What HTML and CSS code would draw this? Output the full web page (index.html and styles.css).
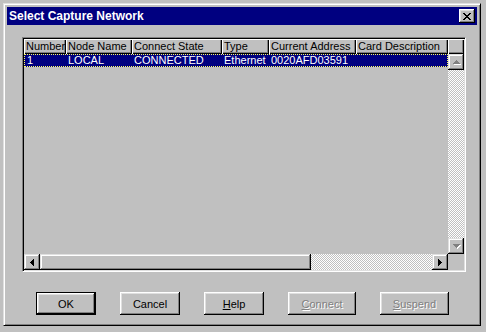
FILE: index.html
```html
<!DOCTYPE html>
<html lang="en">
<head>
  <meta charset="UTF-8" />
  <title>Select Capture Network</title>
  <link rel="stylesheet" href="styles.css">
</head>
<body>
  <div class="window">
    <div class="titlebar">
      <span class="title">Select Capture Network</span>
      <div class="close-btn">
        <svg width="8" height="7" viewBox="0 0 8 7" shape-rendering="crispEdges">
          <path d="M0 0h2v1h1v1h2V1h1V0h2v1H7v1H6v1H5v1h1v1h1v1h1v1H6V6H5V5H3v1H2v1H0V6h1V5h1V4h1V3H2V2H1V1H0z" fill="#000"/>
        </svg>
      </div>
    </div>

    <div class="client">
      <div class="listview">
        <div class="lv-header">
          <div class="hcol w1">Number</div>
          <div class="hcol w2">Node Name</div>
          <div class="hcol w3">Connect State</div>
          <div class="hcol w4">Type</div>
          <div class="hcol w5">Current Address</div>
          <div class="hcol w6">Card Description</div>
          <div class="hcol stub"></div>
        </div>
        <div class="lv-body">
          <div class="rows">
            <div class="row selected">
              <span class="cell w1">1</span>
              <span class="cell w2">LOCAL</span>
              <span class="cell w3">CONNECTED</span>
              <span class="cell w4">Ethernet</span>
              <span class="cell w5">0020AFD03591</span>
              <span class="cell w6"></span>
            </div>
          </div>
          <div class="vscroll">
            <div class="sbtn">
              <svg class="arrow disabled" width="7" height="4" viewBox="0 0 7 4" shape-rendering="crispEdges"><path d="M3 0h1v1h1v1h1v1h1v1H0V3h1V2h1V1h1z"/></svg>
            </div>
            <div class="track"></div>
            <div class="sbtn">
              <svg class="arrow disabled" width="7" height="4" viewBox="0 0 7 4" shape-rendering="crispEdges"><path d="M0 0h7v1H6v1H5v1H4v1H3V3H2V2H1V1H0z"/></svg>
            </div>
          </div>
          <div class="hscroll">
            <div class="sbtn">
              <svg class="arrow" width="4" height="7" viewBox="0 0 4 7" shape-rendering="crispEdges"><path d="M3 0h1v7H3V6H2V5H1V4H0V3h1V2h1V1h1z"/></svg>
            </div>
            <div class="thumb"></div>
            <div class="track"></div>
            <div class="sbtn">
              <svg class="arrow" width="4" height="7" viewBox="0 0 4 7" shape-rendering="crispEdges"><path d="M0 0h1v1h1v1h1v1h1v1H3v1H2v1H1v1H0z"/></svg>
            </div>
          </div>
          <div class="corner"></div>
        </div>
      </div>

      <div class="buttons">
        <div class="btn default">OK</div>
        <div class="btn">Cancel</div>
        <div class="btn"><u>H</u>elp</div>
        <div class="btn wide disabled"><u>C</u>onnect</div>
        <div class="btn wider disabled"><u>S</u>uspend</div>
      </div>
    </div>
  </div>
</body>
</html>
```

FILE: styles.css
```css
body {
  margin: 0;
  background: #c0c0c0;
  font-family: 'Liberation Sans', Arial, sans-serif;
  font-size: 11px;
  color: #000;
}
.window {
  box-sizing: border-box;
  margin: 3px 0 0 3px;
  width: 478px;
  height: 323px;
  padding: 3px;
  background: #c0c0c0;
  border: 1px solid;
  border-color: #dfdfdf #000 #000 #dfdfdf;
  box-shadow: inset 1px 1px #fff, inset -1px -1px #808080;
}
.titlebar {
  height: 18px;
  background: #000080;
  display: flex;
  align-items: center;
  padding-left: 2px;
}
.title {
  color: #fff;
  font-weight: bold;
  font-size: 12px;
}
.close-btn {
  margin-left: auto;
  margin-right: 2px;
  width: 16px;
  height: 14px;
  box-sizing: border-box;
  background: #c0c0c0;
  display: flex;
  align-items: center;
  justify-content: center;
  box-shadow: inset -1px -1px #000, inset 1px 1px #fff, inset -2px -2px #808080, inset 2px 2px #dfdfdf;
}
.client {
  padding: 12px 0 0 15px;
}
.listview {
  box-sizing: border-box;
  width: 444px;
  height: 235px;
  border: 1px solid;
  border-color: #808080 #fff #fff #808080;
  box-shadow: inset 1px 1px #000, inset -1px -1px #dfdfdf;
  padding: 1px;
  background: #c0c0c0;
  display: flex;
  flex-direction: column;
}
.lv-header {
  display: flex;
  height: 15px;
  flex: none;
}
.hcol {
  box-sizing: border-box;
  height: 15px;
  line-height: 14px;
  padding-left: 2px;
  white-space: nowrap;
  overflow: hidden;
  background: #c0c0c0;
  box-shadow: inset 1px 1px #fff, inset -1px -1px #000, inset -2px -2px #808080;
}
.w1 { width: 42px; }
.w2 { width: 66px; }
.w3 { width: 90px; }
.w4 { width: 47px; }
.w5 { width: 87px; }
.w6 { width: 92px; }
.stub { width: 16px; }
.lv-body {
  flex: 1;
  display: grid;
  grid-template-columns: 424px 16px;
  grid-template-rows: 1fr 16px;
}
.rows {
  background: #c0c0c0;
}
.row {
  display: flex;
  height: 13px;
  box-sizing: border-box;
}
.row.selected {
  background: #000080;
  color: #fff;
  border: 1px dotted #ffff60;
}
.cell {
  box-sizing: border-box;
  padding-left: 2px;
  line-height: 11px;
  white-space: nowrap;
  overflow: hidden;
  flex: none;
}
.row .w1 { width: 41px; }
.vscroll {
  display: flex;
  flex-direction: column;
}
.hscroll {
  display: flex;
}
.sbtn {
  width: 16px;
  height: 16px;
  flex: none;
  box-sizing: border-box;
  background: #c0c0c0;
  display: flex;
  align-items: center;
  justify-content: center;
  box-shadow: inset -1px -1px #000, inset 1px 1px #dfdfdf, inset -2px -2px #808080, inset 2px 2px #fff;
}
.arrow path {
  fill: #000;
}
.arrow.disabled {
  filter: drop-shadow(1px 1px 0 #fff);
}
.arrow.disabled path {
  fill: #808080;
}
.track {
  flex: 1;
  background: repeating-conic-gradient(#c0c0c0 0 25%, #fff 0 50%) 0 0 / 2px 2px;
}
.thumb {
  width: 271px;
  flex: none;
  background: #c0c0c0;
  box-shadow: inset -1px -1px #000, inset 1px 1px #dfdfdf, inset -2px -2px #808080, inset 2px 2px #fff;
}
.corner {
  background: #c0c0c0;
}
.buttons {
  display: flex;
  gap: 24px;
  margin-top: 20px;
  padding-left: 14px;
}
.btn {
  box-sizing: border-box;
  width: 60px;
  height: 23px;
  display: flex;
  align-items: center;
  justify-content: center;
  background: #c0c0c0;
  box-shadow: inset -1px -1px #000, inset 1px 1px #fff, inset -2px -2px #808080, inset 2px 2px #dfdfdf;
}
.btn.default {
  border: 1px solid #000;
  box-shadow: inset -1px -1px #000, inset 1px 1px #fff, inset -2px -2px #808080, inset 2px 2px #dfdfdf;
}
.btn.wide { width: 68px; }
.btn.wider { width: 69px; }
.btn.disabled {
  color: #808080;
  text-shadow: 1px 1px 0 #fff;
}
```
